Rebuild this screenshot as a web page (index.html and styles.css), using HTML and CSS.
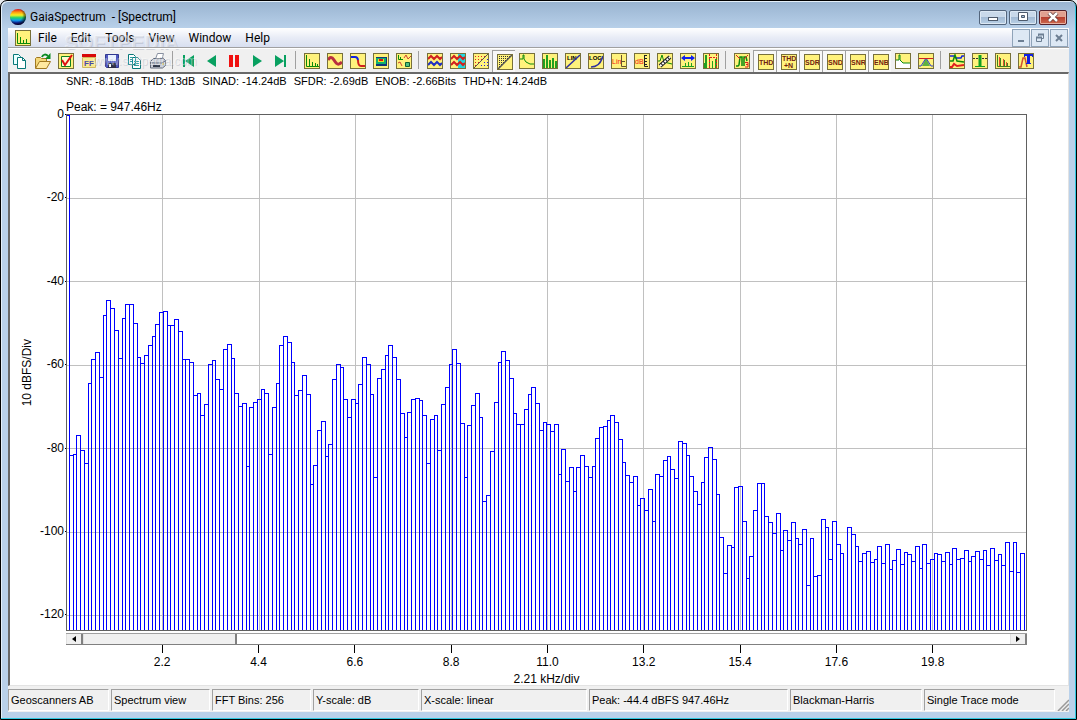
FILE: index.html
```html
<!DOCTYPE html>
<html lang="en">
<head>
    <meta charset="UTF-8">
    <meta name="viewport" content="width=device-width, initial-scale=1.0">
    <title>GaiaSpectrum - [Spectrum]</title>
    <link rel="stylesheet" href="styles.css">
</head>
<body>
<div class="window">
    <header class="titlebar">
        <svg class="logo" viewBox="0 0 16 16">
            <defs>
                <linearGradient id="rainbow" x1="0" y1="0" x2="0" y2="1">
                    <stop offset="0" stop-color="#e01020"/><stop offset=".2" stop-color="#ff9a10"/>
                    <stop offset=".38" stop-color="#f8f020"/><stop offset=".55" stop-color="#20d070"/>
                    <stop offset=".7" stop-color="#10a0e8"/><stop offset=".88" stop-color="#1020b0"/>
                    <stop offset="1" stop-color="#200050"/>
                </linearGradient>
                <radialGradient id="shade" cx=".4" cy=".4" r=".62">
                    <stop offset=".6" stop-color="#000" stop-opacity="0"/><stop offset="1" stop-color="#000" stop-opacity=".75"/>
                </radialGradient>
            </defs>
            <circle cx="8" cy="8" r="8" fill="url(#rainbow)"/>
            <circle cx="8" cy="8" r="8" fill="url(#shade)"/>
        </svg>
        <h1>GaiaSpectrum&nbsp; - [Spectrum]</h1>
        <div class="win-buttons">
            <button aria-label="Minimize"><svg viewBox="0 0 12 10"><rect x="1.5" y="5.5" width="9" height="3" fill="#fff" stroke="#4d5a6c"/></svg></button>
            <button aria-label="Maximize"><svg viewBox="0 0 12 10"><path d="M1.5 .5h9v8h-9z" fill="#fff" stroke="#4d5a6c"/><path d="M4.500 3.500h3v2h-3z" fill="#a3bbd5" stroke="#4d5a6c"/></svg></button>
            <button class="close" aria-label="Close"><svg viewBox="0 0 12 10"><path d="M2 1l8 8M10 1l-8 8" stroke="#5b3535" stroke-width="4"/><path d="M2 1l8 8M10 1l-8 8" stroke="#fff" stroke-width="2.500"/></svg></button>
        </div>
    </header>

    <div class="client">
        <nav class="menubar">
            <svg class="icon" viewBox="1 1 14 14"><path d="M2.500 3v10.500H15M5.500 13V7M8.500 13v-3M11.500 13V9" stroke="#0a8a0a" fill="none"/></svg>
            <a href="#">File</a>
            <a href="#">Edit</a>
            <a href="#">Tools</a>
            <a href="#">View</a>
            <a href="#">Window</a>
            <a href="#">Help</a>
            <div class="mdi-buttons">
                <button aria-label="Minimize child"><svg viewBox="0 0 10 10"><path d="M2 8h6" stroke="#6d7f93" stroke-width="2"/></svg></button>
                <button aria-label="Restore child"><svg viewBox="0 0 10 10"><path d="M3.500 3V1.500h5v4H7M1.500 4.500h5v4h-5z" stroke="#6d7f93" fill="none"/><path d="M1 4.500h6M3 1.500h6" stroke="#6d7f93" stroke-width="2"/></svg></button>
                <button aria-label="Close child"><svg viewBox="0 0 10 10"><path d="M2 2l6 6M8 2l-6 6" stroke="#6d7f93" stroke-width="2"/></svg></button>
            </div>
            <span class="mark" aria-hidden="true">SOFTPEDIA</span>
        </nav>

        <div class="toolbar">
            <button aria-label="New"><svg viewBox="0 0 16 16"><path d="M1.500 1.500h5l2 2v8h-7z" fill="#e8ffff" stroke="#087878"/><path d="M5.500 4.500h5l3 3v8h-8z" fill="#fff" stroke="#087878"/><path d="M10.500 4.500v3h3" fill="none" stroke="#087878"/></svg></button>
            <button aria-label="Open"><svg viewBox="0 0 16 16"><path d="M.5 15V5.500l1-1h4l1 1h5v4" fill="#f5d878" stroke="#a07820"/><path d="M.5 15.500l4-7h11l-4 7z" fill="#ffe9a0" stroke="#a07820"/><path d="M7 4c1-3 4-3 6-1" fill="none" stroke="#0a8a20" stroke-width="2"/><path d="M15.500 0v6H10z" fill="#0a8a20"/></svg></button>
            <button aria-label="Options"><svg class="icon" viewBox="1 1 14 14"><path d="M3.500 3.500h9v10h-9z" fill="#fffbd0" stroke="#108020"/><path d="M4 7l3 5 7-10" fill="none" stroke="#e01010" stroke-width="2"/></svg></button>
            <button aria-label="FFT setup"><svg viewBox="0 0 16 16"><path d="M1.500 4.500h13v10h-13z" fill="#f8e890" stroke="#d0b860"/><path d="M1 1h14v3H1z" fill="#d80808"/><text x="3" y="13" font-size="8" font-weight="bold" fill="#4848a8">FF</text></svg></button>
            <button aria-label="Save"><svg viewBox="0 0 16 16"><path d="M1.500 1.500h13v13h-12l-1-1z" fill="#5058c0" stroke="#303890"/><path d="M4 2h8v6H4z" fill="#e8f0ff"/><path d="M4 10h8v5H4z" fill="#303048"/><path d="M5 11h2v3H5z" fill="#fff"/></svg></button>
            <button aria-label="Copy"><svg viewBox="0 0 16 16"><path d="M1.500 1.500h5l2 2v8h-7zM5.500 4.500h5l3 3v8h-8z" fill="#fff" stroke="#087878"/><path d="M3 4.500h3M3 6.500h2M3 8.500h2M7 8.500h5M7 10.500h5M7 12.500h5" stroke="#30a0a0"/></svg></button>
            <button aria-label="Print"><svg viewBox="0 0 16 16"><path d="M5.500 6l2-5.500h6L12 6" fill="#fff" stroke="#8890a0"/><path d="M.5 8.500l3-3h10l2 2v5l-3 2.500H.5z" fill="#d0d4dc" stroke="#606878"/><path d="M2 10h10l3-2" fill="none" stroke="#606878"/><path d="M3 13h7" stroke="#303848" stroke-width="2"/><path d="M12 11h2" stroke="#d8c020"/></svg></button>
            <span class="sep"></span>
            <button aria-label="First"><svg viewBox="0 0 16 16"><path d="M2 2h2v12H2zM13 2v12L4 8z" fill="#08a060"/></svg></button>
            <button aria-label="Back"><svg viewBox="0 0 16 16"><path d="M12 2v12L3 8z" fill="#08a060"/></svg></button>
            <button aria-label="Pause"><svg viewBox="0 0 16 16"><path d="M2 2h4v12H2zM8 2h4v12H8z" fill="#f01010"/></svg></button>
            <button aria-label="Play"><svg viewBox="0 0 16 16"><path d="M3 2v12l9-6z" fill="#08a060"/></svg></button>
            <button aria-label="Last"><svg viewBox="0 0 16 16"><path d="M2 2v12l9-6zM11 2h2v12h-2z" fill="#08a060"/></svg></button>
            <span class="sep"></span>
            <button aria-label="Spectrum view"><svg class="icon" viewBox="1 1 14 14"><path d="M2.500 2v11.500H15M5.500 13V6M8.500 13V9M11.500 13v-3M13.500 13v-2" stroke="#0a8a0a" fill="none"/></svg></button>
            <button aria-label="Scope view"><svg class="icon" viewBox="1 1 14 14"><path d="M1 7q3-5 6 0t5 4 3-2" stroke="#b83040" stroke-width="3" fill="none"/></svg></button>
            <button aria-label="Filter view"><svg class="icon" viewBox="1 1 14 14"><path d="M1 4h4q3 0 3 4" stroke="#1020e0" stroke-width="2" fill="none"/><path d="M8 7q0 6 3 6h4" stroke="#d02020" stroke-width="2" fill="none"/></svg></button>
            <button aria-label="Spectrogram"><svg class="icon" viewBox="1 1 14 14"><path d="M3 4h11v9H3z" fill="#103878"/><path d="M3 5h10v6H3z" fill="#10b070"/><path d="M5 6h6v3H5z" fill="#e8e020"/><path d="M6 6h4v2H6z" fill="#e01010"/></svg></button>
            <button aria-label="All views"><svg class="icon" viewBox="1 1 14 14"><path d="M2.500 2v4.500H7M4.500 6V4" stroke="#0a8a0a" fill="none"/><path d="M8 5l2-3 2 4 3-3M2 10l2-1 2 4" stroke="#d04030" fill="none"/><path d="M9.500 9.500h4v4h-4z" fill="#50c080" stroke="#106030"/></svg></button>
            <span class="sep"></span>
            <button aria-label="Dual trace"><svg class="icon" viewBox="1 1 14 14"><path d="M1 6l3-3 3 3 3-3 3 3 2-2" stroke="#d02020" stroke-width="2" fill="none"/><path d="M1 12l3-3 3 3 3-3 3 3 2-2" stroke="#2030c0" stroke-width="2" fill="none"/></svg></button>
            <button aria-label="Overlay trace"><svg class="icon" viewBox="1 1 14 14"><path d="M8 1h7v14H8z" fill="#20d8e0"/><path d="M1 6l3-3 3 3 3-3 3 3 2-2M1 12l3-3 3 3 3-3 3 3 2-2" stroke="#d02020" stroke-width="2" fill="none"/></svg></button>
            <button aria-label="Grid colour"><svg class="icon" viewBox="1 1 14 14"><path d="M2 3.500h11M2 6.500h8M2 9.500h5M2 12.500h3" stroke="#e02020" stroke-dasharray="1 2"/><path d="M14 6.500h1M11 9.500h4M8 12.500h7" stroke="#2020e0" stroke-dasharray="1 2"/><path d="M1 15L15 1" stroke="#555"/></svg></button>
            <button class="pressed" aria-label="Grid"><svg class="icon" viewBox="1 1 14 14"><path d="M2 2.500h11M2 4.500h10M2 6.500h8M2 8.500h6M2 10.500h4M2 12.500h2" stroke="#333" stroke-dasharray="1 1"/><path d="M1 15L15 1" stroke="#555" stroke-width="1.500"/></svg></button>
            <button aria-label="Line plot"><svg class="icon" viewBox="1 1 14 14"><path d="M1 6h3V2h1v4l2 3 4 2h4" stroke="#0a8a0a" fill="none"/></svg></button>
            <button aria-label="Bar plot"><svg class="icon" viewBox="1 1 14 14"><path d="M1 6h2v9H1zM4 2h2v13H4zM7 7h2v8H7zM10 5h2v10h-2zM13 8h2v7h-2z" fill="#20a020"/></svg></button>
            <button aria-label="Linear X"><svg class="icon" viewBox="1 1 14 14"><text x="2" y="7" font-size="6" font-weight="bold">LIN</text><path d="M1 15L15 2" stroke="#3030a0" stroke-width="1.500"/></svg></button>
            <button aria-label="Log X"><svg class="icon" viewBox="1 1 14 14"><text x="1" y="7" font-size="6" font-weight="bold">LOG</text><path d="M3 14q9 0 12-11" stroke="#3030a0" stroke-width="1.500" fill="none"/></svg></button>
            <button aria-label="Linear Y"><svg class="icon" viewBox="1 1 14 14"><text x="1" y="11" font-size="7" fill="#f01010">Lin</text><path d="M10.500 2v11.500H15M10.500 8.500H14" stroke="#665030" fill="none"/></svg></button>
            <button aria-label="Decibel Y"><svg class="icon" viewBox="1 1 14 14"><text x="1" y="11" font-size="7" fill="#f01010">dB</text><path d="M10.500 2v11.500H14" stroke="#222" fill="none"/><path d="M12 2v11" stroke="#222" stroke-width="2" stroke-dasharray="1 2"/></svg></button>
            <button aria-label="Measure"><svg class="icon" viewBox="1 1 14 14"><path d="M1 8h2l2-6 2 7 8 2" stroke="#0a8a0a" fill="none"/><path d="M3 13L13 4" stroke="#222" stroke-width="4"/><path d="M3 13L13 4" stroke="#fff" stroke-width="2" stroke-dasharray="2 1"/></svg></button>
            <button aria-label="Span"><svg class="icon" viewBox="1 1 14 14"><path d="M1 5l4-3v2h6V2l4 3-4 3V6H5v2z" fill="#1020f0"/><path d="M2 13.500h12M5.500 13v-3M8.500 13V9M11.500 13v-3" stroke="#20a020"/></svg></button>
            <button aria-label="Band"><svg class="icon" viewBox="1 1 14 14"><path d="M1 15v-5h1V2h2v13zM6 6h1v9H6zM9 8h1v7H9zM12 6h2v9h-2z" fill="#20a020"/><path d="M6.500 1v14M13.500 1v14M7 4.500h6" stroke="#e02020" stroke-dasharray="2 1"/></svg></button>
            <span class="sep"></span>
            <button aria-label="Peak"><svg class="icon" viewBox="1 1 14 14"><path d="M2 13h2l1-1 1-8h2v9M10 13V4h2l1 4" stroke="#0a8a0a" stroke-width="1.500" fill="none"/><path d="M2 2l4 4M14 2l-4 4M11 9.500h3v2h-2 2v2.500h-3" stroke="#e02020" fill="none"/></svg></button>
            <button class="pressed" aria-label="THD"><svg class="icon" viewBox="1 1 14 14"><text x="1" y="11" class="tag">THD</text></svg></button>
            <button class="pressed" aria-label="THD+N"><svg class="icon" viewBox="1 1 14 14"><text x="1" y="7" class="tag">THD</text><text x="3" y="14" class="tag">+N</text></svg></button>
            <button class="pressed" aria-label="SDR"><svg class="icon" viewBox="1 1 14 14"><text x="1" y="11" class="tag">SDR</text></svg></button>
            <button class="pressed" aria-label="SND"><svg class="icon" viewBox="1 1 14 14"><text x="1" y="11" class="tag">SND</text></svg></button>
            <button class="pressed" aria-label="SNR"><svg class="icon" viewBox="1 1 14 14"><text x="1" y="11" class="tag">SNR</text></svg></button>
            <button class="pressed" aria-label="ENB"><svg class="icon" viewBox="1 1 14 14"><text x="1" y="11" class="tag">ENB</text></svg></button>
            <button aria-label="Fill below"><svg class="icon" viewBox="1 1 14 14"><path d="M1 7h3V2h1v5l3 3h7v5H1z" fill="#fff"/><path d="M1 7h3V2h1v5l3 3h7" stroke="#0a8a0a" fill="none"/></svg></button>
            <button aria-label="Window function"><svg class="icon" viewBox="1 1 14 14"><path d="M4 13l4-8 4 8z" fill="#60b040"/><path d="M1 13h2l5-8 5 8h2" stroke="#3040d0" fill="none"/><path d="M1 5.500h14" stroke="#d02020"/></svg></button>
            <span class="sep"></span>
            <button aria-label="Compare"><svg class="icon" viewBox="1 1 14 14"><path d="M1 3h4l2 2h5l1-2h2" stroke="#1020e0" stroke-width="1.500" fill="none"/><path d="M1 8h3l2-6 2 6 7 1" stroke="#0a8a0a" stroke-width="1.500" fill="none"/><path d="M1 14h2l2-3 3 2 7-1" stroke="#e02020" stroke-width="2" fill="none"/></svg></button>
            <button aria-label="Threshold"><svg class="icon" viewBox="1 1 14 14"><path d="M1 5.500h14" stroke="#333" stroke-dasharray="2 1"/><path d="M8 2v12" stroke="#10a020" stroke-width="3"/><path d="M3 13.500h10" stroke="#10a020"/></svg></button>
            <button aria-label="Harmonics"><svg class="icon" viewBox="1 1 14 14"><path d="M2.500 2v11.500H15M5.500 13V5M9.500 13V7M12.500 13v-3" stroke="#408020" fill="none"/><path d="M4.500 13V4M8.500 13V6M11.500 13V9" stroke="#e05030"/></svg></button>
            <button aria-label="Titles"><svg class="icon" viewBox="1 1 14 14"><path d="M1 14h2l2-9h2l2 9" stroke="#d05030" stroke-width="1.500" fill="none"/><path d="M6 1h9v3h-1V3h-2v7h1v1H8v-1h1V3H7v1H6z" fill="#1020e0"/></svg></button>
            <span class="mark small" aria-hidden="true">www.softpedia.com</span>
        </div>

        <main class="view">
            <div class="readouts">
                <span>SNR: -8.18dB</span>
                <span>THD: 13dB</span>
                <span>SINAD: -14.24dB</span>
                <span>SFDR: -2.69dB</span>
                <span>ENOB: -2.66Bits</span>
                <span>THD+N: 14.24dB</span>
            </div>
            <div class="peak">Peak: = 947.46Hz</div>
            <div class="y-title"><span>10 dBFS/Div</span></div>
            <div class="y-axis">
                <span>0</span><span>-20</span><span>-40</span><span>-60</span><span>-80</span><span>-100</span><span>-120</span>
            </div>
            <div class="plot">
                <svg id="chart" viewBox="67 115 959 515" preserveAspectRatio="none">
                    <path id="grid" class="grid-lines"/>
                    <path id="bars" class="bars"/>
                </svg>
            </div>
            <div class="scrollbar">
                <button aria-label="Scroll left"><svg viewBox="0 0 6 6"><path d="M5 0v6L1 3z"/></svg></button>
                <div class="thumb"></div>
                <button class="right" aria-label="Scroll right"><svg viewBox="0 0 6 6"><path d="M1 0v6l4-3z"/></svg></button>
            </div>
            <div class="x-axis">
                <span>2.2</span><span>4.4</span><span>6.6</span><span>8.8</span><span>11.0</span><span>13.2</span><span>15.4</span><span>17.6</span><span>19.8</span>
            </div>
            <div class="x-title">2.21 kHz/div</div>
        </main>

        <footer class="statusbar">
            <span>Geoscanners AB</span>
            <span>Spectrum view</span>
            <span>FFT Bins: 256</span>
            <span>Y-scale: dB</span>
            <span>X-scale: linear</span>
            <span>Peak: -44.4 dBFS 947.46Hz</span>
            <span>Blackman-Harris</span>
            <span>Single Trace mode</span>
            <svg class="grip" viewBox="0 0 12 12"><path d="M1 12L12 1M5 12l7-7M9 12l3-3" stroke="#999" stroke-width="1.500"/></svg>
        </footer>
    </div>
</div>

<script>
    // top edge of every FFT bin, in chart units
    const tops = [
        115, 455, 454, 435, 450, 463, 383, 359, 352, 377, 315, 300, 308, 330, 358, 318, 304, 304, 323, 357,
        363, 355, 345, 336, 324, 312, 311, 325, 325, 319, 331, 359, 359, 362, 395, 393, 415, 404, 364, 360,
        379, 389, 349, 344, 358, 393, 406, 403, 466, 407, 402, 399, 389, 393, 454, 407, 383, 345, 336, 342,
        362, 395, 390, 375, 394, 484, 465, 430, 421, 456, 444, 379, 364, 367, 399, 417, 399, 403, 384, 357,
        364, 394, 477, 378, 369, 355, 345, 357, 379, 413, 437, 412, 399, 398, 400, 415, 463, 419, 415, 450,
        404, 387, 364, 349, 363, 423, 477, 425, 405, 393, 417, 501, 495, 451, 402, 362, 351, 360, 378, 413,
        424, 424, 409, 394, 387, 403, 430, 422, 424, 431, 424, 474, 449, 481, 467, 491, 467, 455, 466, 477,
        466, 438, 427, 426, 420, 415, 422, 439, 462, 475, 482, 476, 505, 498, 510, 489, 521, 474, 476, 460,
        456, 469, 478, 441, 443, 455, 476, 491, 504, 482, 457, 447, 459, 494, 537, 573, 545, 547, 487, 486,
        521, 578, 556, 510, 483, 483, 516, 522, 533, 513, 550, 530, 540, 522, 538, 544, 529, 585, 538, 576,
        575, 519, 527, 559, 521, 544, 553, 630, 527, 534, 546, 561, 553, 551, 562, 559, 546, 563, 544, 569,
        560, 549, 564, 552, 554, 561, 546, 568, 544, 563, 559, 553, 554, 561, 552, 564, 548, 559, 558, 550,
        561, 556, 551, 559, 550, 565, 548, 560, 554, 565, 542, 571, 542, 572, 553
    ];
    const binWidth = 3.76;
    const edge = i => Math.floor(65.6 + i * binWidth) + 0.5;

    let d = '';
    tops.forEach((top, i) => {
        d += `M${edge(i)} 630V${top + 0.5}H${edge(i + 1)}V630`;
    });
    document.getElementById('bars').setAttribute('d', d);

    let g = '';
    for (let i = 1; i <= 9; i++) g += `M${Math.floor(66.6 + i * 96.2) + 0.5} 115V630`;
    for (let i = 1; i <= 6; i++) g += `M67 ${Math.round(114.5 + i * 83.4) + 0.5}H1026`;
    document.getElementById('grid').setAttribute('d', g);
</script>
</body>
</html>
```
FILE: styles.css
```css
* {
    box-sizing: border-box;
}
body {
    margin: 0;
    background: #e8ecf0;
    font-family: "Liberation Sans", Arial, sans-serif;
    font-size: 11px;
    line-height: 14px;
    color: #000;
}
button {
    padding: 0;
    border: none;
    background: none;
    display: flex;
    align-items: center;
    justify-content: center;
}
.window {
    display: flex;
    flex-direction: column;
    min-height: 100vh;
    padding: 0 7px 7px;
    border: 1px solid #000;
    border-radius: 7px 7px 0 0;
    background: linear-gradient(#98b3d0, #b9d1ea 28px);
    box-shadow: inset -1px -1px #30c8e0, inset 1px 1px #e4f0fa;
}
.titlebar {
    display: flex;
    align-items: center;
    height: 27px;
    padding: 5px 2px 0;
}
.logo {
    width: 16px;
    height: 16px;
}
h1 {
    margin: 0 0 0 4px;
    font: 12px Roboto, sans-serif;
}
.win-buttons {
    display: flex;
    gap: 2px;
    margin-left: auto;
}
.win-buttons button {
    width: 28px;
    height: 15px;
    border: 1px solid #53657c;
    border-radius: 2px;
    background: linear-gradient(#c9d9ea 45%, #a3bbd5 50%, #b9d0e6);
    box-shadow: inset 0 0 0 1px #dce8f4;
}
.win-buttons svg {
    width: 12px;
    height: 10px;
}
.win-buttons .close {
    border-color: #54202a;
    background: linear-gradient(#e0a090 45%, #b84030 50%, #cc6a50);
    box-shadow: inset 0 0 0 1px #e8b0a0;
}
.client {
    flex: 1;
    display: flex;
    flex-direction: column;
    background: #f0f0f0;
}
.menubar {
    position: relative;
    display: flex;
    align-items: center;
    gap: 14px;
    height: 19px;
    padding: 0 1px 0 7px;
    background: linear-gradient(#fff, #e8ecf6 50%, #d8dff0);
}
.menubar a {
    color: #000;
    text-decoration: none;
    font: 12px Roboto, sans-serif;
}
.icon {
    width: 16px;
    height: 16px;
    border: 1px solid #77703a;
    background: #fff27c;
}
.menubar .icon {
    margin-right: -7px;
}
.mdi-buttons {
    display: flex;
    gap: 1px;
    margin-left: auto;
}
.mdi-buttons button {
    width: 18px;
    height: 18px;
    border: 1px solid #8fa3b8;
    background: #dde8f4;
}
.mdi-buttons svg {
    width: 10px;
    height: 10px;
}
.mark {
    position: absolute;
    left: 56px;
    top: 3px;
    font: bold 20px "Liberation Sans", sans-serif;
    color: rgba(255, 255, 255, 0.4);
    text-shadow: 1px 1px rgba(120, 130, 150, 0.25);
    pointer-events: none;
}
.toolbar {
    position: relative;
    display: flex;
    height: 25px;
    padding-top: 2px;
    border-top: 1px solid #a0a0a0;
    box-shadow: inset 0 1px #fff;
}
.toolbar button {
    width: 23px;
    height: 22px;
}
.toolbar svg {
    width: 16px;
    height: 16px;
}
.toolbar .pressed {
    padding: 1px 0 0 1px;
    border-left: 1px solid #a0a0a0;
    border-top: 1px solid #a0a0a0;
    background: #f8f8f8;
}
.toolbar .sep {
    width: 8px;
    height: 18px;
    margin-top: 1px;
    background: linear-gradient(#a0a0a0, #a0a0a0) 3px 0 / 1px 100% no-repeat;
}
.toolbar text {
    font-family: "Liberation Sans", sans-serif;
}
.tag {
    font-size: 7px;
    font-weight: bold;
    fill: #702010;
}
.mark.small {
    left: 85px;
    top: 6px;
    font: 12px "Liberation Sans", sans-serif;
}
.view {
    flex: 1;
    display: grid;
    grid-template-columns: 34px 22px 1fr;
    grid-template-rows: 14px 26px minmax(200px, 1fr) 14px 27px 13px;
    padding: 0 41px 0 0;
    border: 1px solid #e3e3e3;
    border-left: 2px solid #696969;
    border-top: 2px solid #696969;
    background: #fff;
}
.readouts {
    grid-column: 3;
    display: flex;
    gap: 7px;
}
.peak {
    grid-column: 3;
    grid-row: 2;
    align-self: end;
    font-size: 12px;
}
.y-title {
    grid-row: 3;
    display: flex;
    align-items: center;
    justify-content: center;
}
.y-title span {
    writing-mode: vertical-rl;
    transform: rotate(180deg);
    font-size: 12px;
}
.y-axis {
    grid-column: 2;
    grid-row: 3;
    display: flex;
    flex-direction: column;
    align-items: flex-end;
}
.y-axis span {
    flex: 20 0 0;
    display: flex;
    gap: 1px;
    line-height: 0;
    font-size: 12px;
}
.y-axis span::after {
    content: "";
    width: 1px;
    height: 1px;
    background: #000;
}
.y-axis span:last-child {
    flex-grow: 4;
}
.plot {
    grid-column: 3;
    grid-row: 3;
    border: 1px solid #606060;
    min-height: 0;
}
.plot svg {
    display: block;
    width: 100%;
    height: 100%;
    shape-rendering: crispEdges;
}
.grid-lines {
    fill: none;
    stroke: #c0c0c0;
}
.bars {
    fill: none;
    stroke: #00f;
}
.scrollbar {
    grid-column: 3;
    display: flex;
    height: 12px;
    margin-top: 2px;
    border-top: 1px solid #a0a0a0;
    border-bottom: 1px solid #808080;
}
.scrollbar button,
.thumb {
    width: 17px;
    background: #f0f0f0;
    border-right: 2px solid #808080;
    border-left: 1px solid #e0e0e0;
}
.scrollbar svg {
    width: 6px;
    height: 6px;
}
.scrollbar .thumb {
    width: 16%;
}
.scrollbar .right {
    margin-left: auto;
}
.x-axis {
    grid-column: 3;
    display: flex;
    padding: 0 4.8% 0 5%;
}
.x-axis span {
    flex: 1 0 0;
    display: flex;
    flex-direction: column;
    align-items: center;
    gap: 2px;
    font-size: 12px;
}
.x-axis span::before {
    content: "";
    width: 1px;
    height: 8px;
    background: #000;
}
.x-title {
    grid-column: 3;
    text-align: center;
    font-size: 12px;
}
.statusbar {
    display: grid;
    grid-template-columns: 101px 99px 99px 106px 166px 199px 132px 1fr 12px;
    gap: 2px;
    padding: 3px 0 1px;
}
.statusbar span {
    height: 22px;
    padding: 3px 2px;
    border: 1px solid #fff;
    border-left-color: #a0a0a0;
    border-top-color: #a0a0a0;
}
.grip {
    width: 12px;
    height: 12px;
    align-self: end;
}
```
